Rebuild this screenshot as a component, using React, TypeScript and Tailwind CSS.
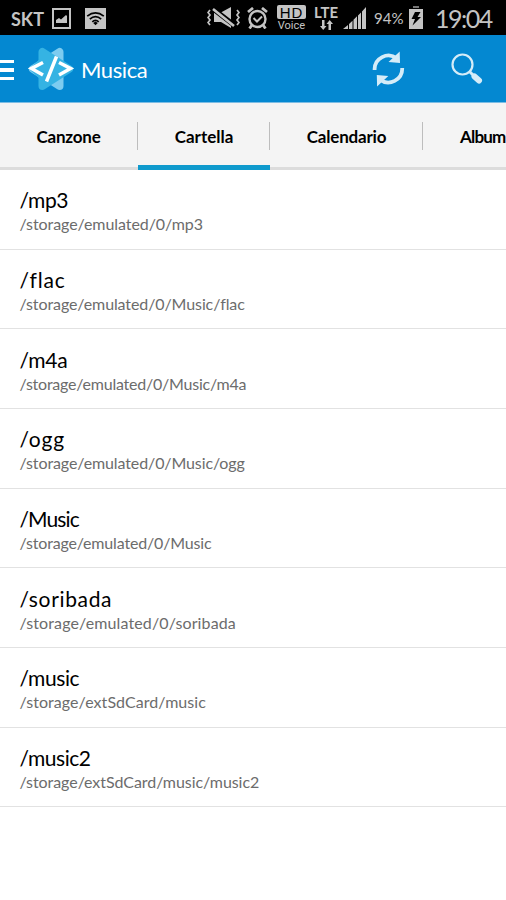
import { clsx } from 'clsx'

interface Folder {
  name: string
  path: string
  nameClass: string
  pathClass: string
}

const folders: Folder[] = [
  { name: '/mp3', path: '/storage/emulated/0/mp3', nameClass: 'tracking-[-0.4px]', pathClass: 'tracking-[-0.07px]' },
  { name: '/flac', path: '/storage/emulated/0/Music/flac', nameClass: 'tracking-[0.8px]', pathClass: 'tracking-[-0.1px]' },
  { name: '/m4a', path: '/storage/emulated/0/Music/m4a', nameClass: 'tracking-[-0.2px]', pathClass: 'tracking-[-0.23px]' },
  { name: '/ogg', path: '/storage/emulated/0/Music/ogg', nameClass: 'tracking-[0.8px]', pathClass: 'tracking-[-0.11px]' },
  { name: '/Music', path: '/storage/emulated/0/Music', nameClass: 'tracking-[-0.9px]', pathClass: 'tracking-[-0.17px]' },
  { name: '/soribada', path: '/storage/emulated/0/soribada', nameClass: 'tracking-[0.65px]', pathClass: 'tracking-[0.12px]' },
  { name: '/music', path: '/storage/extSdCard/music', nameClass: 'tracking-[-0.4px]', pathClass: 'tracking-[0.06px]' },
  { name: '/music2', path: '/storage/extSdCard/music/music2', nameClass: 'tracking-[-0.45px]', pathClass: 'tracking-[-0.06px]' },
]

const tabs = [
  { label: 'Canzone', className: 'w-[138px] justify-center pr-[1px] tracking-[-0.2px]' },
  { label: 'Cartella', className: 'w-[132px] justify-center' },
  { label: 'Calendario', className: 'w-[153px] justify-center tracking-[-0.2px]' },
  { label: 'Album', className: 'w-[83px] justify-start pl-[37px] tracking-[-0.8px]' },
]

function StatusBar() {
  return (
    <div className="flex h-[35px] items-center bg-black text-[#c4c4c4]">
      <span className="mt-[2px] ml-[11px] w-[41px] whitespace-nowrap text-[18px] leading-none font-bold">SKT</span>
      <svg className="mt-[2px]" width="19" height="21" viewBox="0 0 19 21" fill="currentColor">
        <path d="M1 1h17v19H1z" fill="none" stroke="currentColor" strokeWidth="2" />
        <path d="M4 15v-3l3-2 2 1.500 5-4.500 1 1v7z" />
      </svg>
      <svg className="mt-[2px] ml-[14px]" width="21" height="21" viewBox="0 0 21 21">
        <path fill="currentColor" d="M0 0h21v21H0z" />
        <g fill="none" stroke="#000" strokeWidth="1.7">
          <path d="M2.200 8.200Q10.500 1.700 18.800 8.200M4.800 11.200Q10.500 6.200 16.200 11.200M7.300 13.800Q10.500 11 13.700 13.800" />
        </g>
        <path d="m8.200 15 2.300-1.500 2.300 1.500-2.300 2.300z" />
      </svg>

      <svg className="ml-[101px]" width="33" height="22" viewBox="0 0 33 22">
        <path fill="currentColor" d="M7 6h6l11-6v21l-10-6H7z" />
        <path stroke="#000" strokeWidth="5" d="M5 1l22 17" />
        <path stroke="currentColor" strokeWidth="2.600" d="M6 2l21 17" />
        <path
          fill="none"
          stroke="currentColor"
          strokeWidth="1.700"
          d="M3 3l-2 2.500 2 2.500-2 2.500 2 2.500-2 2.500 2 2.500M30 3l2 2.500-2 2.500 2 2.500-2 2.500 2 2.500-2 2.500"
        />
      </svg>
      <svg className="ml-[7px]" width="21" height="22" viewBox="0 0 21 22" fill="none" stroke="currentColor">
        <circle cx="10.500" cy="12" r="8" strokeWidth="2.400" />
        <path strokeWidth="2.800" d="M1 5l5-4M20 5l-5-4M5 18l-2.500 3.500M16 18l2.500 3.500" />
        <path strokeWidth="2" d="M6.500 11l3.500 3.500 5-5" />
      </svg>
      <div className="mt-[1px] ml-[9px] flex w-[29px] flex-col items-center">
        <span className="flex h-[14px] w-full items-center justify-center rounded-[2px] bg-[#c4c4c4] font-['Liberation_Sans',sans-serif] text-[15px] leading-none tracking-[1px] text-black">
          HD
        </span>
        <span className="mt-[1px] font-['Roboto',sans-serif] text-[11px] leading-[11px]">Voice</span>
      </div>
      <div className="ml-[8px] flex w-[24px] flex-col items-center">
        <span className="text-[15px] leading-[12px] font-bold">LTE</span>
        <svg className="mt-[2px]" width="13" height="10" viewBox="0 0 13 10" fill="currentColor">
          <path d="M2 0h2.500v6H6.500L3.200 10 0 6h2zM8.500 10H11V4h2L9.700 0 6.500 4h2z" />
        </svg>
      </div>
      <svg className="ml-[5px]" width="23" height="22" viewBox="0 0 23 22" fill="currentColor">
        <path d="M0 22l5-4v4zM6 17l3.500-3.300V22H6zM10.500 12.700l3.500-3.400V22h-3.500zM15 8.400L18 5.400V22h-3zM19 4.400L23 0v22h-4z" />
      </svg>
      <span className="mt-[2px] ml-[8px] w-[35px] whitespace-nowrap text-[15px] leading-none">94%</span>
      <svg width="14" height="23" viewBox="0 0 14 23">
        <path fill="#777" d="M4 0h6v2H4z" />
        <path fill="currentColor" d="M0 3h14v20H0z" />
        <path d="M6 6h5.500L8.500 11H12l-8.500 8.500L6 13H2.500z" />
      </svg>
      <span className="mt-[2px] ml-[12px] whitespace-nowrap text-[25px] leading-none tracking-[-1.500px]">19:04</span>
    </div>
  )
}

function Logo() {
  return (
    <svg width="46" height="44" viewBox="0 0 46 44">
      <g strokeLinejoin="round" strokeWidth="8">
        <path fill="#7dccf0" stroke="#7dccf0" d="M31.500 5v34L5 22z" />
        <path fill="#35b3e3" stroke="#35b3e3" d="M14.500 5v34L41 22z" />
        <path fill="#35b3e3" stroke="none" d="M1 22L12 12h8v20h-8z" />
      </g>
      <g fill="none" stroke="#fff" strokeWidth="3.500">
        <path d="M15 15.500L3.500 21.500 15 28M31 15.500l11.500 6L31 28M28.500 9.500l-10 25" />
      </g>
    </svg>
  )
}

function Header() {
  return (
    <header className="flex h-[68px] items-center border-b border-[#7dbde4] bg-[#0488d1] text-white">
      <div className="mt-[3px] flex w-[14px] flex-col gap-[5px]">
        <span className="h-[3.500px] bg-white" />
        <span className="h-[3.500px] bg-white" />
        <span className="h-[3.500px] bg-white" />
      </div>
      <div className="ml-[14px]">
        <Logo />
      </div>
      <h1 className="mt-[3px] ml-[7px] text-[22px] leading-none tracking-[-0.400px]">Musica</h1>
      <svg className="ml-auto" width="34" height="36" viewBox="0 0 34 36" fill="#d5ecf8">
        <path fill="none" stroke="#d5ecf8" strokeWidth="3.800" d="M2.600 19A13.900 13.900 0 0 1 25 7.500M30.200 17A13.900 13.900 0 0 1 7.800 28.500" />
        <path d="M27.700.500L28 12l-11.500-1zM5.100 35.500L4.800 24l11.500 1z" />
      </svg>
      <svg className="mr-[23px] ml-[45px]" width="32" height="32" viewBox="0 0 32 32" fill="none" stroke="#d5ecf8">
        <circle cx="11.500" cy="11.500" r="10" strokeWidth="2.200" />
        <path strokeWidth="3" d="M18.500 18.500l4 4" />
        <path strokeWidth="6" strokeLinejoin="round" strokeLinecap="round" d="M23.500 23.500l4.500 4" />
      </svg>
    </header>
  )
}

function TabBar() {
  return (
    <nav className="flex h-[67px] bg-[#f4f4f4]">
      {tabs.map((tab, i) => (
        <div
          key={tab.label}
          className={clsx(
            'relative flex shrink-0 items-center border-b-[3px] border-[#dcdcdc] pt-[4px] text-[17px] font-bold text-black',
            tab.className,
          )}
        >
          {tab.label}
          {i < 3 && <span className="absolute top-[19px] -right-[0.400px] h-[28px] w-[1.500px] bg-[#bdbdbd]" />}
          {i === 1 && <span className="absolute inset-x-0 -bottom-[3px] h-[5px] bg-[#0f9acd]" />}
        </div>
      ))}
    </nav>
  )
}

export default function App() {
  return (
    <div className="h-[900px] w-[506px] overflow-hidden bg-white font-['Lato',sans-serif]">
      <StatusBar />
      <Header />
      <TabBar />
      <ul>
        {folders.map((folder) => (
          <li key={folder.path} className="flex h-[79.680px] flex-col border-b border-[#e2e2e2] pt-[16.300px] pl-[19.500px]">
            <span className={clsx('text-[21px] leading-[28px] text-black', folder.nameClass)}>{folder.name}</span>
            <span className={clsx('text-[16px] leading-[20px] text-[#6c6c6c]', folder.pathClass)}>{folder.path}</span>
          </li>
        ))}
      </ul>
    </div>
  )
}
